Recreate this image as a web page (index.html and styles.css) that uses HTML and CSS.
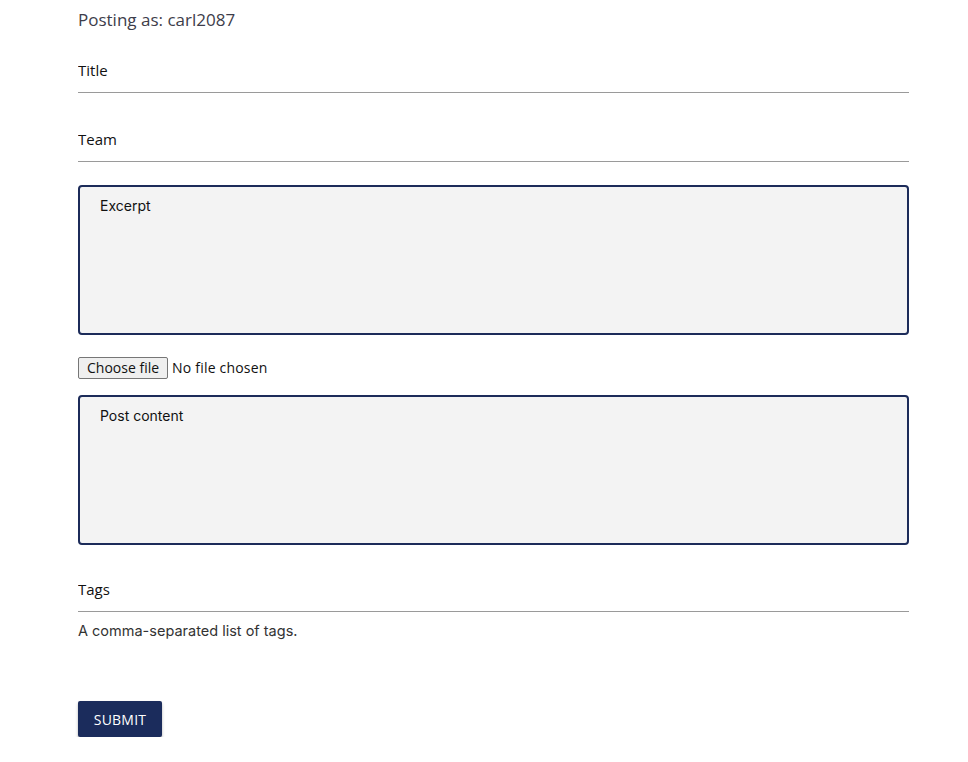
FILE: index.html
```html
<!DOCTYPE html>
<html>
<head>
<meta charset="utf-8">
<link rel="stylesheet" href="styles.css">
</head>
<body>
<main class="page">
  <p class="posting">Posting as: carl2087</p>
  <form class="form">
    <input class="line-input first" type="text" placeholder="Title">
    <input class="line-input team" type="text" placeholder="Team">
    <textarea class="box" placeholder="Excerpt"></textarea>
    <div class="file">
      <button class="file-btn" type="button">Choose file</button>
      <span class="file-name">No file chosen</span>
    </div>
    <textarea class="box content" placeholder="Post content"></textarea>
    <input class="line-input tags" type="text" placeholder="Tags">
    <p class="help">A comma-separated list of tags.</p>
    <button class="submit" type="button">Submit</button>
  </form>
</main>
</body>
</html>
```
FILE: styles.css
```css
html, body {
  margin: 0;
  padding: 0;
  background: #fff;
}
.page {
  width: 831px;
  margin-left: 78px;
  font-family: "Open Sans", "Noto Sans", sans-serif;
  color: #222;
}
.posting {
  margin: 0;
  padding-top: 9px;
  font-size: 17px;
  line-height: 22px;
  color: #3d3d4a;
}
.form {
  display: flex;
  flex-direction: column;
}
.line-input {
  display: block;
  box-sizing: border-box;
  width: 100%;
  height: 37px;
  border: none;
  border-bottom: 1px solid #9a9a9a;
  padding: 0 0 9px 0;
  margin: 0;
  font-family: "Open Sans", "Noto Sans", sans-serif;
  font-size: 15px;
  color: #111;
  outline: none;
  background: transparent;
}
.line-input::placeholder {
  color: #111;
}
.line-input.first {
  margin-top: 25px;
}
.line-input.team {
  margin-top: 32px;
}
.box {
  display: block;
  box-sizing: border-box;
  width: 100%;
  height: 150px;
  margin-top: 23px;
  border: 2px solid #1c2b59;
  border-radius: 4px;
  background: #f3f3f3;
  padding: 10px 20px;
  font-family: "Inter", "Roboto", sans-serif;
  font-size: 14px;
  line-height: 18px;
  resize: none;
  outline: none;
}
.box::placeholder {
  color: #111;
}
.file {
  display: flex;
  align-items: center;
  gap: 4px;
  margin-top: 22px;
  height: 22px;
  font-family: "Open Sans", "Noto Sans", sans-serif;
  font-size: 14px;
  line-height: 20px;
  color: #111;
}
.file-btn {
  box-sizing: border-box;
  height: 22px;
  padding: 0 8px 1px;
  margin: 0;
  border: 1px solid #767676;
  border-radius: 2px;
  background: #efefef;
  font-family: "Open Sans", "Noto Sans", sans-serif;
  font-size: 14px;
  line-height: 18px;
  color: #111;
}
.file-name {
  padding-bottom: 1px;
  letter-spacing: 0.2px;
}
.box.content {
  margin-top: 16px;
}
.line-input.tags {
  margin-top: 30px;
}
.help {
  margin: 0;
  padding-top: 9px;
  font-family: "Inter", "Roboto", sans-serif;
  font-size: 14.5px;
  line-height: 20px;
  color: #333;
}
.submit {
  align-self: flex-start;
  margin-top: 60px;
  width: 84px;
  height: 36px;
  border: none;
  border-radius: 2px;
  background: #1b2c5c;
  color: #fff;
  font-family: "Open Sans", "Noto Sans", sans-serif;
  font-size: 14px;
  text-transform: uppercase;
  letter-spacing: 0.2px;
  box-shadow: 0 2px 3px rgba(0,0,0,0.3);
}
```
